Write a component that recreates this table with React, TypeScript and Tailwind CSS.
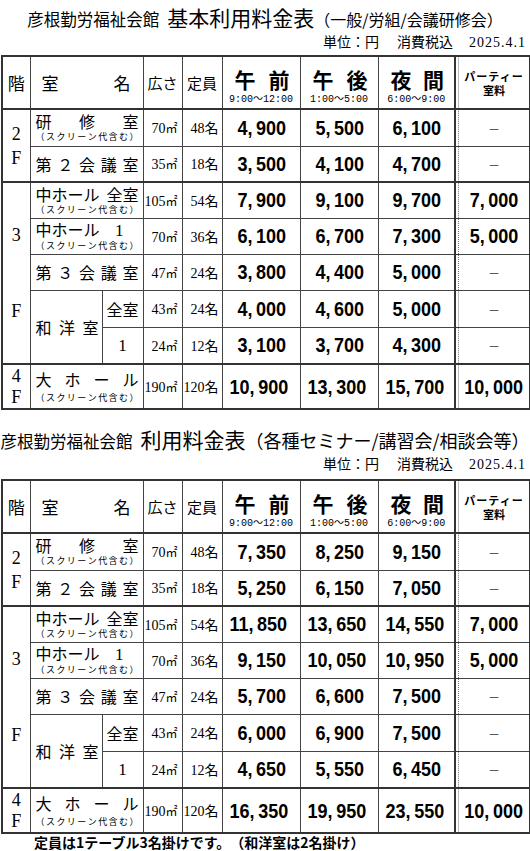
import React from 'react';

const JP = "font-['Noto_Sans_CJK_JP',sans-serif]";
const SERIF = "font-['Liberation_Serif','Noto_Sans_CJK_JP',serif]";
const PRICE = "font-['Liberation_Sans',sans-serif] font-bold";
const MONO = "font-['Liberation_Mono','Noto_Sans_CJK_JP',monospace]";

const td = 'border border-[#444] p-0';
const tdEnd = 'border border-[#444] border-b-2 border-b-[#333] p-0';

const prices1 = [
  ['4,900', '5,500', '6,100', '－'],
  ['3,500', '4,100', '4,700', '－'],
  ['7,900', '9,100', '9,700', '7,000'],
  ['6,100', '6,700', '7,300', '5,000'],
  ['3,800', '4,400', '5,000', '－'],
  ['4,000', '4,600', '5,000', '－'],
  ['3,100', '3,700', '4,300', '－'],
  ['10,900', '13,300', '15,700', '10,000'],
];

const prices2 = [
  ['7,350', '8,250', '9,150', '－'],
  ['5,250', '6,150', '7,050', '－'],
  ['11,850', '13,650', '14,550', '7,000'],
  ['9,150', '10,050', '10,950', '5,000'],
  ['5,700', '6,600', '7,500', '－'],
  ['6,000', '6,900', '7,500', '－'],
  ['4,650', '5,550', '6,450', '－'],
  ['16,350', '19,950', '23,550', '10,000'],
];

const Spread = ({ text, className = '' }: { text: string; className?: string }) => (
  <div className={`flex justify-between ${className}`}>
    {Array.from(text).map((c, i) => (
      <span key={i}>{c}</span>
    ))}
  </div>
);

const Screen = ({ className = '' }: { className?: string }) => (
  <Spread text="（スクリーン代含む）" className={`text-[9px] leading-[11px] ${JP} ${className}`} />
);

const Price = ({ v, center }: { v: string; center?: boolean }) => {
  if (!v.includes(',')) {
    return <span className={`text-[12px] text-[#333] ${JP}`}>{v}</span>;
  }
  const [a, b] = v.split(',');
  return (
    <span className={`inline-block scale-x-90 text-[20px] ${PRICE} ${center ? 'origin-center' : 'origin-right'}`}>
      {a}
      <span className="mr-[4px]">,</span>
      {b}
    </span>
  );
};

const Cells = ({ area, cap, p, end }: { area: string; cap: string; p: string[]; end?: boolean }) => {
  const c = end ? tdEnd : td;
  return (
    <>
      <td className={`${c} whitespace-nowrap pr-[4px] text-right`}>
        <span className={`text-[14px] ${SERIF}`}>{area}</span>
        <span className={`text-[12px] ${JP}`}>㎡</span>
      </td>
      <td className={`${c} whitespace-nowrap pr-[3px] text-right`}>
        <span className={`text-[14px] ${SERIF}`}>{cap}</span>
        <span className={`text-[14px] ${JP}`}>名</span>
      </td>
      <td className={`${c} pr-[13px] text-right`}>
        <Price v={p[0]} />
      </td>
      <td className={`${c} pr-[13px] text-right`}>
        <Price v={p[1]} />
      </td>
      <td className={`${c} border-r-2 border-r-[#333] pr-[13px] text-right`}>
        <Price v={p[2]} />
      </td>
      <td
        className={`${end ? 'border-y border-b-2' : 'border-y'} border-[#444] border-b-[#333] p-0 bg-[linear-gradient(#777_50%,transparent_50%)] bg-[length:1px_2px] bg-right bg-repeat-y`}
      />
      <td className={`${c} border-l-0 text-center`}>
        <Price v={p[3]} center />
      </td>
    </>
  );
};

const TimeHead = ({ label, time, last }: { label: string; time: string; last?: boolean }) => (
  <th className={`${tdEnd} align-top pt-[10px] font-normal ${last ? 'border-r-2 border-r-[#333]' : ''}`}>
    <div className={`flex justify-between pl-[12px] pr-[10px] text-[21px] font-bold leading-[24px] ${JP}`}>
      <span>{label[0]}</span>
      <span>{label[1]}</span>
    </div>
    <div className={`mt-[2px] text-[10px] leading-[14px] ${MONO}`}>{time}</div>
  </th>
);

const PriceTable = ({ prices }: { prices: string[][] }) => (
  <table className="w-[528px] table-fixed border-collapse border-2 border-[#333] leading-none text-black">
    <colgroup>
      <col className="w-[28px]" />
      <col className="w-[72px]" />
      <col className="w-[41px]" />
      <col className="w-[39px]" />
      <col className="w-[40px]" />
      <col className="w-[78px]" />
      <col className="w-[78px]" />
      <col className="w-[77px]" />
      <col className="w-[4px]" />
      <col className="w-[71px]" />
    </colgroup>
    <thead>
      <tr className="h-[53px]">
        <th className={`${tdEnd} text-[17px] font-normal ${JP}`}>階</th>
        <th colSpan={2} className={`${tdEnd} font-normal`}>
          <div className={`flex justify-between pl-[11px] pr-[12px] text-[17px] ${JP}`}>
            <span>室</span>
            <span>名</span>
          </div>
        </th>
        <th className={`${tdEnd} text-[15px] font-normal ${JP}`}>広さ</th>
        <th className={`${tdEnd} text-[15px] font-normal ${JP}`}>定員</th>
        <TimeHead label="午前" time="9:00～12:00" />
        <TimeHead label="午後" time="1:00～5:00" />
        <TimeHead label="夜間" time="6:00～9:00" last />
        <th className="border-t border-b-2 border-[#444] border-b-[#333] p-0 bg-[linear-gradient(#777_50%,transparent_50%)] bg-[length:1px_2px] bg-right bg-repeat-y" />
        <th className={`${tdEnd} border-l-0 text-[11px] font-bold leading-[14px] ${JP}`}>
          <div className="tracking-[1px]">パーティー</div>
          <div>室料</div>
        </th>
      </tr>
    </thead>
    <tbody>
      <tr className="h-[37px]">
        <td rowSpan={2} className={`${tdEnd} text-center text-[18px] leading-[24px] ${SERIF}`}>
          <div>2</div>
          <div>F</div>
        </td>
        <td colSpan={2} className={`${td} pl-[5px] pr-[4px]`}>
          <Spread text="研修室" className={`text-[16px] leading-[17px] ${JP}`} />
          <Screen className="mt-[1px]" />
        </td>
        <Cells area="70" cap="48" p={prices[0]} />
      </tr>
      <tr className="h-[36px]">
        <td colSpan={2} className={`${tdEnd} pl-[5px] pr-[4px]`}>
          <Spread text="第２会議室" className={`text-[16px] leading-[18px] ${JP}`} />
        </td>
        <Cells area="35" cap="18" p={prices[1]} end />
      </tr>
      <tr className="h-[36px]">
        <td rowSpan={5} className={`${tdEnd} text-center text-[18px] leading-[20px] ${SERIF}`}>
          <div className="flex flex-col items-center gap-[56px]">
            <span>3</span>
            <span>F</span>
          </div>
        </td>
        <td colSpan={2} className={`${td} pl-[5px] pr-[4px]`}>
          <div className={`flex justify-between text-[16px] leading-[17px] ${JP}`}>
            <span>中ホール</span>
            <span>全室</span>
          </div>
          <Screen className="mt-[1px]" />
        </td>
        <Cells area="105" cap="54" p={prices[2]} />
      </tr>
      <tr className="h-[36px]">
        <td colSpan={2} className={`${td} pl-[5px] pr-[4px]`}>
          <div className={`flex items-baseline justify-between text-[16px] leading-[17px] ${JP}`}>
            <span>中ホール</span>
            <span className={`mr-[15px] text-[17px] ${SERIF}`}>1</span>
          </div>
          <Screen className="mt-[1px]" />
        </td>
        <Cells area="70" cap="36" p={prices[3]} />
      </tr>
      <tr className="h-[36px]">
        <td colSpan={2} className={`${td} pl-[5px] pr-[4px]`}>
          <Spread text="第３会議室" className={`text-[16px] leading-[18px] ${JP}`} />
        </td>
        <Cells area="47" cap="24" p={prices[4]} />
      </tr>
      <tr className="h-[37px]">
        <td rowSpan={2} className={`${tdEnd} pl-[5px] pr-[3px]`}>
          <Spread text="和洋室" className={`text-[16px] leading-[18px] ${JP}`} />
        </td>
        <td className={`${td} text-center text-[16px] ${JP}`}>全室</td>
        <Cells area="43" cap="24" p={prices[5]} />
      </tr>
      <tr className="h-[37px]">
        <td className={`${tdEnd} text-center text-[17px] ${SERIF}`}>1</td>
        <Cells area="24" cap="12" p={prices[6]} end />
      </tr>
      <tr className="h-[45px]">
        <td className={`${td} text-center text-[18px] leading-[21px] ${SERIF}`}>
          <div>4</div>
          <div>F</div>
        </td>
        <td colSpan={2} className={`${td} pl-[5px] pr-[4px]`}>
          <Spread text="大ホール" className={`text-[16px] leading-[18px] ${JP}`} />
          <Screen className="mt-[4px]" />
        </td>
        <Cells area="190" cap="120" p={prices[7]} />
      </tr>
    </tbody>
  </table>
);

const Heading = ({ main, sub, subSize }: { main: string; sub: string; subSize: string }) => (
  <div className={`text-black [text-spacing-trim:space-all] ${JP}`}>
    <div className="flex h-[24px] items-baseline justify-center leading-[24px]">
      <span className="text-[16.5px]">彦根勤労福祉会館</span>
      <span className="ml-[8px] text-[21px]">{main}</span>
      <span className={subSize}>{sub}</span>
    </div>
    <div className="mt-[3px] flex h-[18px] items-baseline justify-end pr-[4px] text-[14px] leading-[18px]">
      <span>単位：円</span>
      <span className="ml-[18px]">消費税込</span>
      <span className={`ml-[16px] tracking-[1px] ${SERIF}`}>2025.4.1</span>
    </div>
  </div>
);

export default function App() {
  return (
    <div className="w-[530px] bg-white pt-[5px] text-black">
      <Heading main="基本利用料金表" sub="（一般/労組/会議研修会）" subSize="text-[16px]" />
      <div className="ml-[1px] mt-[5px]">
        <PriceTable prices={prices1} />
      </div>
      <div className="mt-[17px]">
        <Heading main="利用料金表" sub="（各種セミナー/講習会/相談会等）" subSize="text-[18px]" />
      </div>
      <div className="ml-[1px] mt-[7px]">
        <PriceTable prices={prices2} />
      </div>
      <p className={`pl-[34px] text-[14px] font-bold leading-[16px] [text-spacing-trim:space-all] ${JP}`}>
        定員は1テーブル3名掛けです。（和洋室は2名掛け）
      </p>
    </div>
  );
}
